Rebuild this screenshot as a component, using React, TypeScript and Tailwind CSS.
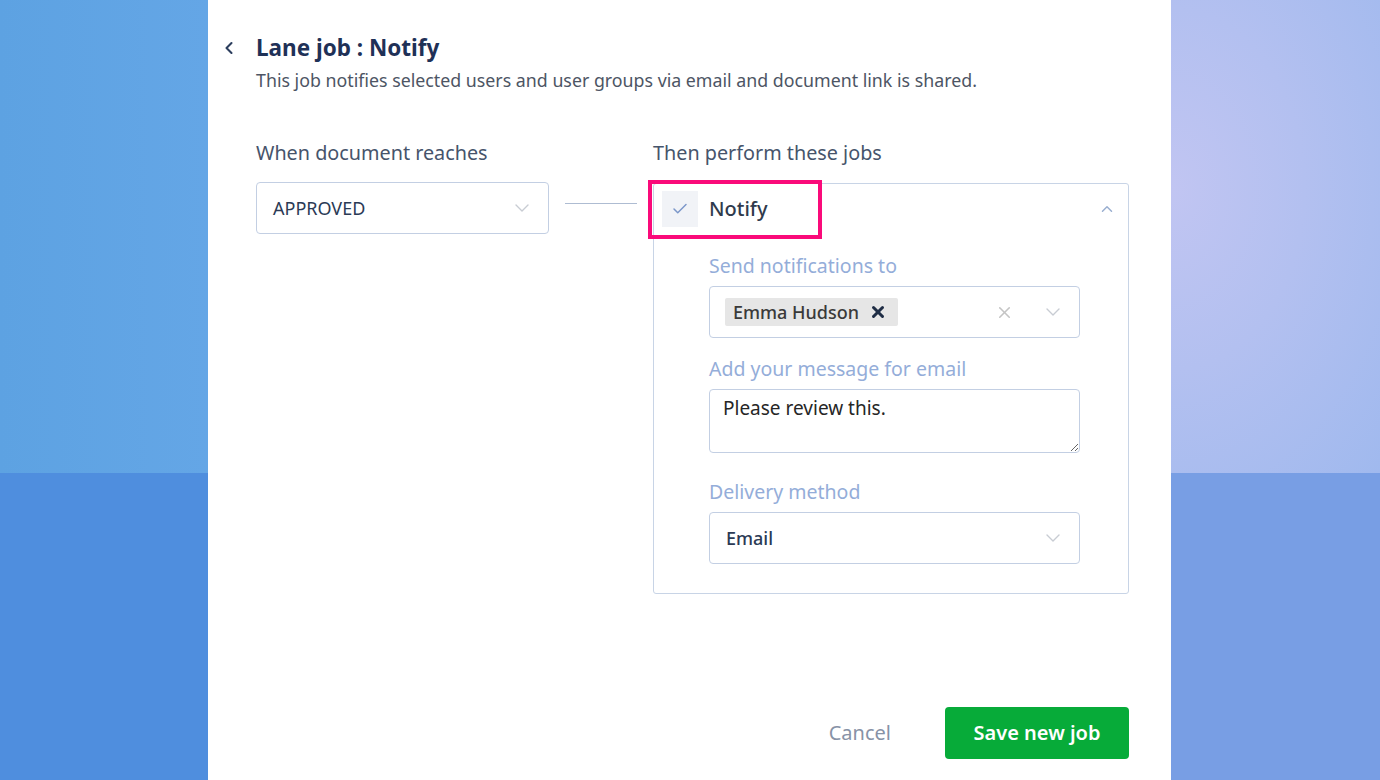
import React, { useState } from 'react';
import { ChevronLeft, ChevronDown, ChevronUp, Check, X } from 'lucide-react';

function SelectBox({ value, bold = false }: { value: string; bold?: boolean }) {
  return (
    <div className="flex items-center justify-between h-[52px] pl-4 pr-[14px] bg-white border border-[#c3cfe3] rounded-[4px]">
      <span className={`text-[18px] text-[#2b3a55] ${bold ? 'font-medium' : ''}`}>{value}</span>
      <ChevronDown className="w-6 h-6 text-[#c8ccd3]" strokeWidth={1.4} />
    </div>
  );
}

function FieldLabel({ children }: { children: React.ReactNode }) {
  return <div className="text-[19.5px] leading-[26px] text-[#94add9] mb-[7px]">{children}</div>;
}

export default function App() {
  const [message, setMessage] = useState('Please review this.');

  return (
    <div className="w-[1380px] h-[780px] flex overflow-hidden" style={{ fontFamily: '"Noto Sans", "Open Sans", sans-serif' }}>
      {/* left backdrop */}
      <div className="w-[208px] flex flex-col shrink-0">
        <div className="h-[473px] bg-gradient-to-r from-[#5da2e2] to-[#64a6e6]" />
        <div className="flex-1 bg-[#4f8ede]" />
      </div>

      {/* dialog */}
      <div className="w-[963px] shrink-0 bg-white flex flex-col">
        <div className="flex items-start pl-[11px] pt-[34px]">
          <button className="w-[37px] h-[28px] flex items-center text-[#2c3e5e]">
            <ChevronLeft className="w-5 h-5" strokeWidth={2.5} />
          </button>
          <div>
            <h1 className="text-[22.5px] leading-[28px] font-bold text-[#1f3157]">Lane job : Notify</h1>
            <p className="mt-[5px] text-[17.8px] leading-[26px] text-[#4d5564]">
              This job notifies selected users and user groups via email and document link is shared.
            </p>
          </div>
        </div>

        <div className="flex pl-[48px] pr-[42px] mt-[47px]">
          <div className="w-[293px] shrink-0">
            <div className="text-[19.8px] leading-[26px] text-[#46546b] mb-[16px]">When document reaches</div>
            <SelectBox value="APPROVED" />
          </div>

          <div className="w-[104px] shrink-0 flex items-start pt-[63px] px-4">
            <div className="w-full h-px bg-[#aebcd2]" />
          </div>

          <div className="flex-1">
            <div className="text-[19.8px] leading-[26px] text-[#46546b] mb-[17px]">Then perform these jobs</div>
            <div className="border border-[#c8d4e6] rounded-[3px] pb-[29px]">
              <div className="relative flex items-center h-[50px] pl-[8px] pr-[12px]">
                <div className="w-[36px] h-[36px] bg-[#f1f3f7] flex items-center justify-center">
                  <Check className="w-[18px] h-[18px] text-[#7b97c9]" strokeWidth={2} />
                </div>
                <span className="ml-[11px] text-[20px] text-[#2f3a4c] font-medium">Notify</span>
                <ChevronUp className="ml-auto w-[18px] h-[18px] text-[#9aafd0]" strokeWidth={2} />
                <div className="absolute left-[-6px] top-[-4px] w-[174px] h-[59px] border-4 border-[#fa0a7a] pointer-events-none" />
              </div>

              <div className="pl-[55px] pr-[48px] pt-[19px]">
                <FieldLabel>Send notifications to</FieldLabel>
                <div className="flex items-center h-[52px] pl-[15px] pr-[14px] border border-[#c3cfe3] rounded-[4px]">
                  <div className="flex items-center gap-[10px] h-[28px] pl-[8px] pr-[11px] bg-[#e6e6e6] rounded-[2px]">
                    <span className="text-[18px] text-[#3a3a3a] font-medium">Emma Hudson</span>
                    <X className="w-[18px] h-[18px] text-[#1f2d45]" strokeWidth={4} />
                  </div>
                  <X className="ml-auto w-[19px] h-[19px] text-[#c4c4c4]" strokeWidth={2} />
                  <ChevronDown className="ml-[27px] w-6 h-6 text-[#c8ccd3]" strokeWidth={1.4} />
                </div>

                <div className="mt-[18px]">
                  <FieldLabel>Add your message for email</FieldLabel>
                  <textarea
                    value={message}
                    onChange={(e) => setMessage(e.target.value)}
                    className="block w-full h-[64px] px-[13px] pt-[6px] text-[19px] leading-6 text-[#262626] border border-[#c3cfe3] rounded-[4px] outline-none resize-y"
                  />
                </div>

                <div className="mt-[26px]">
                  <FieldLabel>Delivery method</FieldLabel>
                  <SelectBox value="Email" bold />
                </div>
              </div>
            </div>
          </div>
        </div>

        <div className="mt-auto flex items-center justify-end gap-[54px] pr-[42px] pb-[21px]">
          <button className="text-[20px] text-[#8792a6]">Cancel</button>
          <button className="w-[184px] h-[52px] rounded-[4px] bg-[#07ab39] text-white text-[20px] font-semibold">
            Save new job
          </button>
        </div>
      </div>

      {/* right backdrop */}
      <div className="flex-1 flex flex-col">
        <div className="h-[473px] bg-[radial-gradient(ellipse_at_0%_40%,#c1c5f2_0%,#b3c0f0_45%,#a0b9ee_100%)]" />
        <div className="flex-1 bg-[#789ee4]" />
      </div>
    </div>
  );
}
